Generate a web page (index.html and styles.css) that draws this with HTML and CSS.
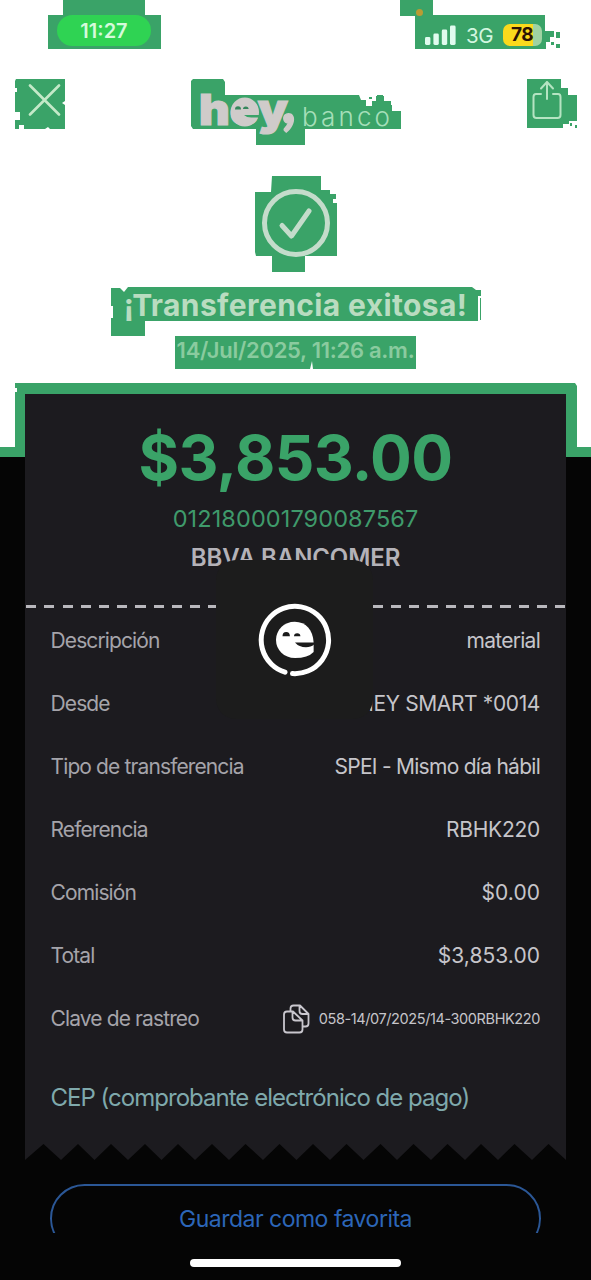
FILE: index.html
```html
<!DOCTYPE html>
<html lang="es">
<head>
<meta charset="utf-8">
<title>Transferencia exitosa</title>
<link rel="stylesheet" href="styles.css">
</head>
<body>
<div class="screen">
  <header class="header">
    <svg class="backdrop" width="591" height="457" viewBox="0 0 591 457" fill="#3aa368">
      <path d="M63 0H145V15H161V49H48V15H63Z"/>
      <path d="M16 79H65V101L62 103L65 105V129H50L48 127L45 129H24V125H19V129H15V120H20V112H15V92H17V88H15V81Z"/>
      <path d="M193 79H223L225 82V95H359L361 100H366V106H372V101H376V96H384V101H391V105H392V111H401V129H305V145H256V129H193L191 126V81Z"/>
      <path d="M369 97H372V99H369ZM377 95H383V98H377Z"/>
      <path d="M400 0H433V15H545V31H554V37H550V42H546V49H415V16H400ZM556 32H560V38H556ZM556 44H560V48H556ZM551 42H554V45H551Z"/>
      <path d="M527 79H561V88H568V95H577V121H569V124H563V128H527ZM570 123H572V126H570ZM575 125H577V128H575Z"/>
      <path d="M272 176H321V190H330V194H336V199H333V203H337V256H305V272H272V256H256L255 252V192H271Z"/>
      <path d="M111 288H120L124 292L128 287H472L476 290H481V296H478V321H145V336H111V318H113V306H111ZM480 298H481V320H480Z"/>
      <path d="M175 336H416V369H313L312 361L310 369H175Z"/>
      <path d="M15 383H575L577 386V447H591V457H0V447H15V392H17V388H15Z"/>
    </svg>

    <div class="status-bar">
      <span class="clock">11:27</span>
      <span class="rec-dot"></span>
      <div class="status-icons">
        <svg width="31" height="20" viewBox="0 0 31 20" fill="#e0fbee">
          <rect x="0" y="12" width="5.4" height="8" rx="1.4"/>
          <rect x="8.4" y="8.5" width="5.4" height="11.500" rx="1.4"/>
          <rect x="16.800" y="4.500" width="5.400" height="15.500" rx="1.4"/>
          <rect x="25" y="0.500" width="5.600" height="19.500" rx="1.4"/>
        </svg>
        <span class="network">3G</span>
        <span class="battery">78</span>
      </div>
    </div>

    <div class="nav">
      <svg class="close" width="34" height="34" viewBox="0 0 34 34" fill="none" stroke="#c4e9c8" stroke-width="2.600" stroke-linecap="round"><path d="M2 1.500L31 30.500M31 1.500L2 30.500"/></svg>
      <svg class="logo" width="196" height="60" viewBox="0 0 196 60">
        <text class="logo-hey" x="0" y="41" textLength="89" lengthAdjust="spacingAndGlyphs">hey</text>
        <text class="logo-comma" x="82.500" y="38.500">,</text>
        <ellipse cx="45.800" cy="28" rx="14.200" ry="14.500" fill="#cfcbca"/>
        <path d="M36 25.500a3 3.200 0 0 1 6 0zM44 25a2.800 2.500 0 0 1 5.600 0z" fill="#35875c"/>
        <path d="M45 31H60V33.500H54Q48 34 45 31Z" fill="#3aa368"/>
        <text class="logo-banco" x="103" y="41.500" textLength="88">banco</text>
      </svg>
      <svg class="share" width="30" height="40" viewBox="0 0 30 40" fill="none" stroke="#b5e4c2" stroke-width="2" stroke-linecap="round" stroke-linejoin="round"><path d="M9 14H4Q1.500 14 1.500 17V35Q1.500 38 4.500 38H25.500Q28.500 38 28.500 35V17Q28.500 14 26 14H21M15 19V2M9 8.500L15 2L21 8.500"/></svg>
    </div>

    <svg class="check" width="70" height="70" viewBox="0 0 70 70" fill="none" stroke="#c4dccb" stroke-linecap="round" stroke-linejoin="round">
      <circle cx="35" cy="35" r="31.500" stroke-width="5"/>
      <path stroke-width="5" d="M21 37.500L30.500 48L48 23"/>
    </svg>
    <h1 class="title">¡Transferencia exitosa!</h1>
    <p class="date">14/Jul/2025, 11:26 a.m.</p>
  </header>

  <main class="card">
    <div class="summary">
      <div class="amount">$3,853.00</div>
      <div class="account">012180001790087567</div>
      <div class="bank">BBVA BANCOMER</div>
    </div>
    <div class="divider"></div>
    <dl class="details">
      <div class="row"><dt>Descripción</dt><dd>material</dd></div>
      <div class="row"><dt>Desde</dt><dd class="alnum source">HEY SMART *0014</dd></div>
      <div class="row"><dt>Tipo de transferencia</dt><dd>SPEI - Mismo día hábil</dd></div>
      <div class="row"><dt>Referencia</dt><dd class="alnum">RBHK220</dd></div>
      <div class="row"><dt>Comisión</dt><dd class="money">$0.00</dd></div>
      <div class="row"><dt>Total</dt><dd class="money">$3,853.00</dd></div>
      <div class="row"><dt>Clave de rastreo</dt>
        <dd class="tracking">
          <svg width="27" height="30" viewBox="0 0 27 30" fill="none" stroke="#c9c7ce" stroke-width="1.800" stroke-linejoin="round"><path d="M4 7.500H10L19.500 16.500V25.500Q19.500 28.500 16.500 28.500H4Q1 28.500 1 25.500V10.500Q1 7.500 4 7.500ZM9.500 7.500V13.500Q9.500 16.500 12.500 16.500H19.500"/><path d="M7.500 7V4.500Q7.500 1.500 10.500 1.500H17L25.500 10V19.500Q25.500 22.500 22.500 22.500H20M16.500 1.500V7Q16.500 10 19.500 10H25.500"/></svg>
          <span class="code">058-14/07/2025/14-300RBHK220</span>
        </dd>
      </div>
    </dl>
    <a class="cep">CEP (comprobante electrónico de pago)</a>
    <svg class="torn" width="541" height="16" viewBox="0 0 541 16"><path fill="#050505" d="M0 16L18.500 0L36 16L53 0L69.500 16L86 0L103 16L120 0L136.500 16L153 0L170 16L187 0L204 16L220.500 0L238 16L254.500 0L271.500 16L288 0L305 16L321.500 0L338.500 16L355.500 0L372 16L388.500 0L406 16L422.500 0L440 16L456 0L473 16L489.500 0L507 16L523.500 0L541 16Z"/></svg>
    <div class="loader">
      <svg width="74" height="74" viewBox="0 0 74 74">
        <path d="M27 69.200A33.700 33.700 0 1 1 34.500 70.600" fill="none" stroke="#fff" stroke-width="5" stroke-linecap="round"/>
        <path d="M36.800 18.800C48 18.800 55 27 55.600 39.500V49Q50 55 37 55C26 55 18 47 18 37C18 27 26 18.800 36.800 18.800Z" fill="#fff"/>
        <path d="M24.500 33.200a3.700 4.300 0 0 1 7.400 0zM36 33.200a3.200 3 0 0 1 6.400 0z" fill="#1b1b1b"/>
        <path d="M37 39.500H56V41.500Q53 44.300 48 44.300Q41 44.300 37 39.500Z" fill="#1b1b1b"/>
      </svg>
    </div>
  </main>

  <footer class="footer">
    <div class="button-clip"><button class="favorite">Guardar como favorita</button></div>
    <div class="home-bar"></div>
  </footer>
</div>
</body>
</html>
```
FILE: styles.css
```css
* { box-sizing: border-box; }
body { margin: 0; font-family: Inter, "Liberation Sans", sans-serif; }
.screen { width: 591px; height: 1280px; overflow: hidden; background: #050505; display: flex; flex-direction: column; }

.header { position: relative; height: 457px; margin-bottom: -63px; flex: none; background: #fff; display: flex; flex-direction: column; align-items: center; }
.backdrop { position: absolute; left: 0; top: 0; }
.header > :not(.backdrop) { position: relative; }

.status-bar { width: 100%; height: 79px; flex: none; padding: 15px 49px 0 57px; display: flex; justify-content: space-between; align-items: flex-start; }
.clock { width: 94px; height: 31px; border-radius: 16px; background: #2fd353; color: #d5fadb; font-size: 20px; font-weight: 600; line-height: 32px; text-align: center; letter-spacing: 0; }
.rec-dot { position: absolute; left: 416px; top: 9px; width: 7px; height: 7px; border-radius: 50%; background: #b99c33; }
.status-icons { display: flex; align-items: center; height: 40px; }
.network { margin-left: 10px; width: 30px; font-size: 20.5px; line-height: 22px; padding-top: 1px; color: #d3f7e0; letter-spacing: -0.5px; }
.battery { margin-left: 7px; width: 39px; height: 22px; border-radius: 7px; background: linear-gradient(90deg, #fbd91c 78%, #9fd3a2 78%); color: #2c1305; font-size: 19px; font-weight: 700; line-height: 22px; text-align: center; letter-spacing: -0.5px; padding-right: 1px; }

.nav { width: 100%; height: 75px; flex: none; display: flex; align-items: flex-start; justify-content: space-between; padding: 5px 29px 0 28px; }
.logo { overflow: visible; }
.share { margin-top: -4px; }
.logo-hey { font: 900 43px Inter, sans-serif; fill: #cfcbca; stroke: #cfcbca; stroke-width: 1.2px; }
.logo-comma { font: 900 60px Lato, sans-serif; fill: #cfcbca; stroke: #cfcbca; stroke-width: 1.5px; }
.logo-banco { font: 300 26px Inter, sans-serif; fill: #a5dfb9; }

.check { margin-top: 34px; flex: none; }
.title { margin: 26px 0 0; height: 42px; line-height: 42px; font-size: 30px; font-weight: 700; color: #b9dcc0; white-space: nowrap; letter-spacing: 0.38px; }
.date { margin: 9px 0 0; height: 30px; line-height: 30px; font-size: 22px; font-weight: 600; color: #8acb9f; white-space: nowrap; letter-spacing: -0.27px; }

.card { position: relative; width: 541px; height: 766px; flex: none; margin-left: 25px; background: #1c1b1f; display: flex; flex-direction: column; }
.summary { height: 211px; flex: none; padding-top: 28px; display: flex; flex-direction: column; align-items: center; white-space: nowrap; }
.amount { height: 72px; line-height: 72px; font-size: 62px; font-weight: 700; color: #3aa368; letter-spacing: -0.6px; }
.account { height: 50px; line-height: 50px; font-size: 23.5px; color: #3f9a6b; letter-spacing: 0.1px; }
.bank { height: 26px; line-height: 27px; font-size: 24px; font-weight: 600; color: #b4b2b8; letter-spacing: -0.1px; }
.divider { height: 3px; flex: none; margin-left: 1px; background: repeating-linear-gradient(90deg, #b9b8bd 0 10px, transparent 10px 18.25px); }

.details { margin: 0; padding: 1px 26px 0; }
.row { height: 63px; display: flex; justify-content: space-between; align-items: center; font-size: 21px; white-space: nowrap; }
.row dt { color: #a5a4aa; letter-spacing: -0.88px; margin-left: -0.5px; }
.row dd { margin: 0; color: #c6c5ca; letter-spacing: -0.73px; }
.row .alnum { letter-spacing: -0.25px; }
.row .source { letter-spacing: -0.38px; }
.row .money { letter-spacing: 0.05px; }
.row .tracking { display: flex; align-items: center; gap: 9px; }
.code { font-size: 14.5px; letter-spacing: -0.4px; }
.cep { height: 80px; padding: 0 25.5px; line-height: 96px; font-size: 24px; color: #7fa9ac; white-space: nowrap; letter-spacing: -0.98px; }
.torn { margin-top: auto; display: block; }
.loader { position: absolute; left: 191px; top: 166px; width: 157px; height: 159px; border-radius: 20px; background: #1c1c1c; display: flex; align-items: center; justify-content: center; }

.footer { flex: 1; display: flex; flex-direction: column; align-items: center; }
.button-clip { width: 491px; height: 49px; margin-top: 24px; overflow: hidden; flex: none; }
.favorite { display: block; width: 491px; height: 69px; border: 2px solid #2b5796; border-radius: 35px; background: none; color: #2c66b8; font-family: inherit; font-size: 23px; letter-spacing: -0.5px; padding: 0; white-space: nowrap; }
.home-bar { width: 211px; height: 8px; margin-top: 26px; border-radius: 4px; background: #fff; }
```
